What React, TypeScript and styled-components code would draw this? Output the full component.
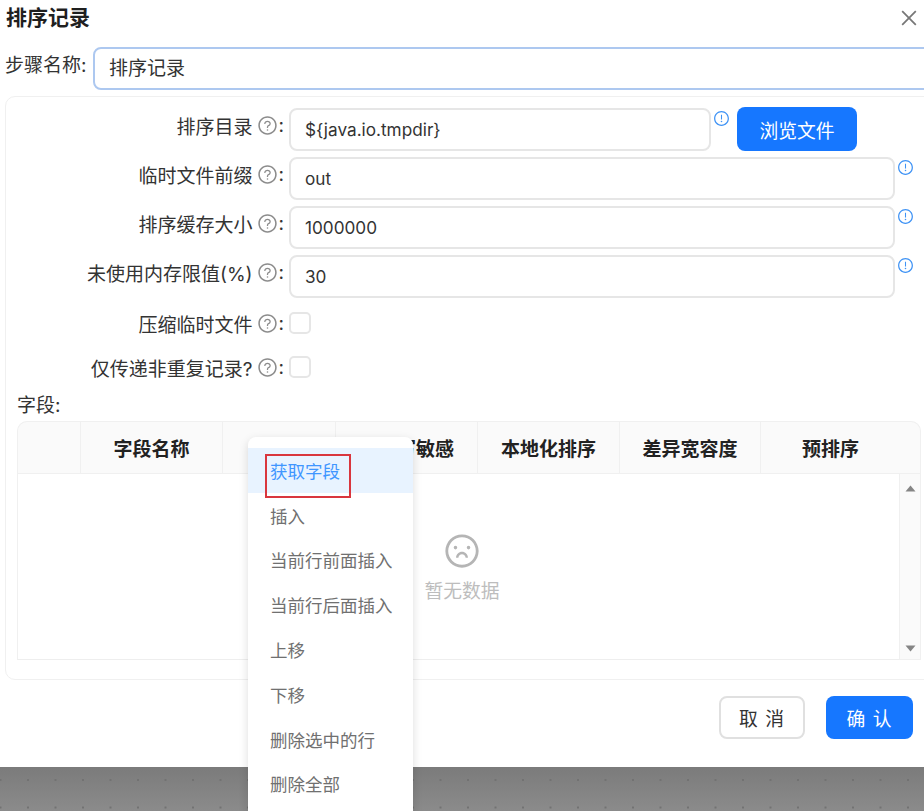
import React from "react";
import styled, { createGlobalStyle } from "styled-components";
import {
  AiOutlineClose,
  AiOutlineExclamationCircle,
  AiOutlineFrown,
  AiOutlineQuestionCircle,
} from "react-icons/ai";

const GlobalStyle = createGlobalStyle`
  html, body {
    margin: 0;
    padding: 0;
    height: 100%;
    overflow: hidden;
  }
  body {
    font-family: Inter, "Noto Sans CJK SC", sans-serif;
    color: #333;
  }
`;

const Page = styled.div`
  position: relative;
  width: 924px;
  height: 811px;
  overflow: hidden;
  background-color: #858585;
  background-image: radial-gradient(circle, #727272 0.8px, transparent 1.1px),
    linear-gradient(#7b7b7b, #8b8b8b);
  background-size: 27.5px 27.5px, 100% 44px;
  background-position: 14.25px 23.75px, 0 767px;
  background-repeat: repeat, no-repeat;
`;

const Dialog = styled.div`
  width: 940px;
  height: 767px;
  background: #fff;
  display: flex;
  flex-direction: column;
`;

const Header = styled.div`
  height: 47px;
  width: 924px;
  padding: 0 4px 0 6px;
  box-sizing: border-box;
  display: flex;
  justify-content: space-between;
  align-items: flex-start;
`;

const Title = styled.div`
  font-size: 21px;
  line-height: 36px;
  font-weight: 700;
  color: #1f1f1f;
`;

const CloseIcon = styled(AiOutlineClose)`
  font-size: 22px;
  color: #777;
  margin-top: 7px;
`;

const StepRow = styled.div`
  display: flex;
  align-items: center;
  height: 42px;
  padding-left: 5px;
`;

const StepLabel = styled.label`
  width: 88px;
  font-size: 19px;
  line-height: 36px;
  margin-top: -4px;
  color: #333;
  white-space: nowrap;
`;

const Field = styled.div<{ $w: number; $focus?: boolean }>`
  width: ${(p) => p.$w}px;
  height: 43px;
  box-sizing: border-box;
  border: 2px solid ${(p) => (p.$focus ? "#adc8f0" : "#e6e6e6")};
  border-radius: 8px;
  background: #fff;
  padding: 0 14px;
  font-size: 19px;
  line-height: 39px;
  color: #333;
  flex: none;
  white-space: nowrap;
`;

const ValueField = styled(Field)`
  font-size: 17.2px;
`;

const Panel = styled.div`
  margin: 7px 0 0 5px;
  width: 935px;
  height: 584px;
  box-sizing: border-box;
  border: 1px solid #f0f0f0;
  border-radius: 10px;
  padding-top: 11px;
`;

const FormRow = styled.div<{ $h: number; $mb: number; $mt?: number }>`
  display: flex;
  align-items: flex-start;
  height: ${(p) => p.$h}px;
  margin-top: ${(p) => p.$mt ?? 0}px;
  margin-bottom: ${(p) => p.$mb}px;
`;

const Label = styled.div`
  width: 283px;
  flex: none;
  box-sizing: border-box;
  display: flex;
  justify-content: flex-end;
  align-items: center;
  height: 34px;
  font-size: 19px;
  color: #333;
  white-space: nowrap;
  padding: 1px 5px 0 0;
`;

const CheckLabel = styled(Label)`
  height: 21px;
`;

const Help = styled(AiOutlineQuestionCircle)`
  font-size: 21px;
  color: #8c8c8c;
  margin-left: 4px;
  margin-right: 1px;
  flex: none;
`;

const Info = styled(AiOutlineExclamationCircle)`
  font-size: 17px;
  color: #3f93f5;
  margin: 2px -1px 0 2px;
  flex: none;
`;

const CheckBox = styled.span`
  width: 22px;
  height: 22px;
  box-sizing: border-box;
  border: 2px solid #e6e6e6;
  border-radius: 5px;
  background: #fff;
  flex: none;
`;

const PrimaryButton = styled.button`
  height: 44px;
  border: none;
  border-radius: 8px;
  background: #1677ff;
  color: #fff;
  font-family: inherit;
  font-size: 18.8px;
  padding: 0;
  flex: none;
`;

const BrowseButton = styled(PrimaryButton)`
  width: 120px;
  margin: -1px 0 0 8px;
`;

const FieldsTitle = styled.div`
  margin: 0 0 7px 11px;
  height: 17px;
  line-height: 17px;
  font-size: 19px;
  color: #333;
`;

const Table = styled.div`
  margin-left: 11px;
  width: 904px;
  height: 239px;
  display: flex;
  flex-direction: column;
  border-radius: 10px 10px 0 0;
  overflow: hidden;
  background: #fafafa;
  box-shadow: inset 0 0 0 1px #f0f0f0;
`;

const HeadRow = styled.div`
  display: grid;
  grid-template-columns: 64px 142px 113px 142px 142px 141px 139px 1fr;
  height: 53px;
  flex: none;
  border-bottom: 1px solid #f0f0f0;
  box-sizing: border-box;
`;

const HeadCell = styled.div`
  display: flex;
  align-items: center;
  justify-content: center;
  padding-top: 1px;
  font-size: 19px;
  font-weight: 700;
  color: #222;
  border-right: 1px solid #f0f0f0;
  white-space: nowrap;
  &:nth-last-child(-n + 2) {
    border-right: none;
  }
`;

const Body = styled.div`
  flex: 1;
  display: flex;
  min-height: 0;
`;

const Empty = styled.div`
  width: 883px;
  background: #fff;
  border-left: 1px solid #f0f0f0;
  border-right: 1px solid #f0f0f0;
  border-bottom: 1px solid #eeeeee;
  box-sizing: border-box;
  display: flex;
  flex-direction: column;
  align-items: center;
  padding: 58px 0 0 7px;
  color: #bdbdbd;
  font-size: 18.8px;
`;

const EmptyIcon = styled(AiOutlineFrown)`
  font-size: 38px;
  color: #b5b5b5;
  margin-bottom: 6px;
`;

const ScrollBar = styled.div`
  flex: 1;
  display: flex;
  flex-direction: column;
  justify-content: space-between;
  align-items: center;
  padding: 11px 0 8px;
`;

const Arrow = styled.svg`
  width: 11px;
  height: 7px;
  fill: #858585;
`;

const Footer = styled.div`
  width: 924px;
  display: flex;
  justify-content: flex-end;
  gap: 21px;
  padding: 16px 11px 0 0;
  box-sizing: border-box;
`;

const CancelButton = styled.button`
  width: 86px;
  height: 43px;
  box-sizing: border-box;
  border: 2px solid #e0e0e0;
  border-radius: 8px;
  background: #fff;
  color: #333;
  font-family: inherit;
  font-size: 18.8px;
  padding: 0;
  letter-spacing: 1px;
`;

const ConfirmButton = styled(PrimaryButton)`
  width: 87px;
  height: 43px;
  letter-spacing: 1px;
`;

const Menu = styled.div`
  position: absolute;
  left: 248px;
  top: 437px;
  width: 165px;
  height: 400px;
  padding-top: 11px;
  box-sizing: border-box;
  background: #fff;
  border-radius: 8px;
  box-shadow: 0 3px 10px rgba(0, 0, 0, 0.14);
`;

const MenuItem = styled.div<{ $active?: boolean }>`
  height: 44.8px;
  padding-left: 22px;
  display: flex;
  align-items: center;
  font-size: 17.5px;
  color: ${(p) => (p.$active ? "#4096ff" : "#707070")};
  background: ${(p) => (p.$active ? "#e8f3ff" : "transparent")};
  white-space: nowrap;
`;

const Marker = styled.div`
  position: absolute;
  left: 265px;
  top: 454px;
  width: 86px;
  height: 44px;
  box-sizing: border-box;
  border: 2.5px solid #d9363e;
`;

const columns = ["", "字段名称", "", "大小写敏感", "本地化排序", "差异宽容度", "预排序", ""];

const menuItems = [
  "获取字段",
  "插入",
  "当前行前面插入",
  "当前行后面插入",
  "上移",
  "下移",
  "删除选中的行",
  "删除全部",
];

const wideRows = [
  { label: "临时文件前缀", value: "out" },
  { label: "排序缓存大小", value: "1000000" },
  { label: "未使用内存限值(%)", value: "30" },
];

export default function App() {
  return (
    <Page>
      <GlobalStyle />
      <Dialog>
        <Header>
          <Title>排序记录</Title>
          <CloseIcon />
        </Header>
        <StepRow>
          <StepLabel>步骤名称:</StepLabel>
          <Field $w={840} $focus>
            排序记录
          </Field>
        </StepRow>
        <Panel>
          <FormRow $h={43} $mb={6}>
            <Label>
              排序目录
              <Help />:
            </Label>
            <ValueField $w={422}>{"${java.io.tmpdir}"}</ValueField>
            <Info />
            <BrowseButton>浏览文件</BrowseButton>
          </FormRow>
          {wideRows.map((row) => (
            <FormRow key={row.label} $h={43} $mb={6}>
              <Label>
                {row.label}
                <Help />:
              </Label>
              <ValueField $w={606}>{row.value}</ValueField>
              <Info />
            </FormRow>
          ))}
          <FormRow $h={22} $mt={14} $mb={22}>
            <CheckLabel>
              压缩临时文件
              <Help />:
            </CheckLabel>
            <CheckBox />
          </FormRow>
          <FormRow $h={22} $mb={19}>
            <CheckLabel>
              仅传递非重复记录?
              <Help />:
            </CheckLabel>
            <CheckBox />
          </FormRow>
          <FieldsTitle>字段:</FieldsTitle>
          <Table>
            <HeadRow>
              {columns.map((col, i) => (
                <HeadCell key={i}>{col}</HeadCell>
              ))}
            </HeadRow>
            <Body>
              <Empty>
                <EmptyIcon />
                暂无数据
              </Empty>
              <ScrollBar>
                <Arrow viewBox="0 0 11 7">
                  <path d="M5.5 0.5 10.5 6.5H0.5Z" />
                </Arrow>
                <Arrow viewBox="0 0 11 7">
                  <path d="M5.5 6.5 10.5 0.5H0.5Z" />
                </Arrow>
              </ScrollBar>
            </Body>
          </Table>
        </Panel>
        <Footer>
          <CancelButton>取 消</CancelButton>
          <ConfirmButton>确 认</ConfirmButton>
        </Footer>
      </Dialog>
      <Menu>
        {menuItems.map((item, i) => (
          <MenuItem key={item} $active={i === 0}>
            {item}
          </MenuItem>
        ))}
      </Menu>
      <Marker />
    </Page>
  );
}
